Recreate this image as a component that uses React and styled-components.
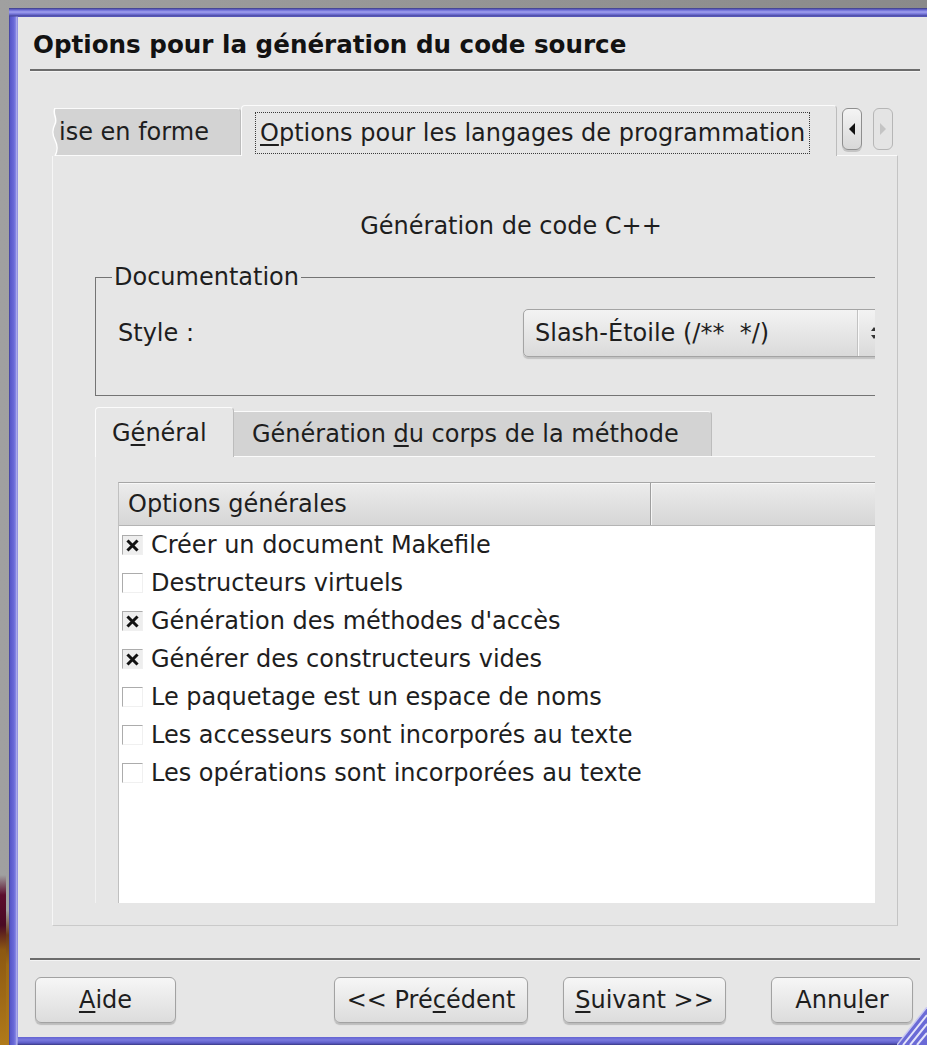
import React from "react";
import styled, { createGlobalStyle } from "styled-components";

const GlobalStyle = createGlobalStyle`
  html, body { margin: 0; padding: 0; overflow: hidden; }
  body {
    font-family: "DejaVu Sans", "Liberation Sans", sans-serif;
    font-size: 24px;
    color: #1e1e1e;
  }
  * { box-sizing: border-box; }
`;

const Desktop = styled.div`
  position: relative;
  width: 927px;
  height: 1045px;
  overflow: hidden;
  padding: 8px 0 0 9px;
  background:
    linear-gradient(to bottom, transparent 875px, #5c0d2e 895px, #4a0a24 925px, #8c5812 950px, #b07a1a 1045px) left top / 6px 100% no-repeat,
    linear-gradient(to bottom, transparent 910px, #6a3a1c 935px, #9c6a16 965px, #b07a1a 1045px) left top / 9px 100% no-repeat,
    linear-gradient(to right, #a0a0a0, #8a8a8a);
`;

const Window = styled.div`
  width: 932px;
  height: 1037px;
  padding: 9px 9px 8px 9px;
  display: flex;
  background:
    linear-gradient(to bottom, #3a3a82 0, #6c6cd6 2px, #a0a0ee 4px, #7474da 6px, #46469c 8px, transparent 9px),
    linear-gradient(to right, #3a3a82 0, #5656c8 1px, #6a6ad8 5px, #8a8ae6 7px, #c4c4f0 8px, transparent 9px),
    linear-gradient(to top, #3a3a82 0, #5c5cc8 2px, #7a7ade 5px, transparent 8px),
    #6464d2;
`;

const Dialog = styled.div`
  flex: 1;
  min-width: 0;
  display: flex;
  flex-direction: column;
  padding: 0 12px;
  background: #e6e6e6;
`;

const Title = styled.h1`
  margin: 14px 0 0;
  padding-left: 3px;
  font-size: 24.6px;
  line-height: 28px;
  font-weight: bold;
  color: #121212;
  white-space: nowrap;
`;

const Rule = styled.div`
  height: 2px;
  margin-top: ${(p) => p.$top}px;
  background: #6c6c6c;
  box-shadow: 0 1px 0 #f4f4f4;
`;

const TabWidget = styled.div`
  display: flex;
  flex-direction: column;
  margin: ${(p) => p.$top}px ${(p) => p.$side}px 0;
`;

const TabBar = styled.div`
  display: flex;
  align-items: flex-end;
  height: ${(p) => p.$h}px;
  padding-left: ${(p) => p.$indent || 0}px;
`;

const Tab = styled.div`
  position: relative;
  display: flex;
  align-items: center;
  flex: none;
  width: ${(p) => p.$w}px;
  height: ${(p) => p.$h}px;
  padding-left: ${(p) => p.$pad}px;
  white-space: nowrap;
  line-height: 28px;
  border-top: 1px solid #fbfbfb;
  border-right: 1px solid #bcbcbc;
  border-radius: 0 4px 0 0;
  background: ${(p) => (p.$active ? "#e6e6e6" : "#d3d3d3")};
  ${(p) =>
    p.$active
      ? `
    z-index: 1;
    margin-bottom: -1px;
    border-left: 1px solid #fbfbfb;
    border-radius: 4px 4px 0 0;
  `
      : ""}
`;

const TornEdge = styled.svg`
  position: absolute;
  left: -1px;
  top: -1px;
`;

const FocusRing = styled.span`
  display: flex;
  align-items: center;
  height: 42px;
  padding: 0 4px;
  margin-top: 3px;
  border: 1px dotted #3a3a3a;
`;

const Mnemonic = styled.span`
  text-decoration: underline;
  text-underline-offset: 3px;
  text-decoration-thickness: 2px;
`;

const ScrollButton = styled.div`
  display: flex;
  align-items: center;
  justify-content: center;
  flex: none;
  width: 20px;
  height: 42px;
  margin: 0 0 5px ${(p) => p.$gap}px;
  border: 1px solid ${(p) => (p.$disabled ? "#b6b6b6" : "#8e8e8e")};
  border-radius: 6px;
  background: ${(p) =>
    p.$disabled ? "#e4e4e4" : "linear-gradient(to bottom, #f4f4f4, #d8d8d8)"};
  box-shadow: ${(p) => (p.$disabled ? "none" : "0 2px 0 #c4c4c4")};
`;

const Panel = styled.div`
  display: flex;
  height: 771px;
  padding: 20px 22px 22px 42px;
  border: 1px solid;
  border-color: #fafafa #c4c4c4 #cacaca #f6f6f6;
`;

const Viewport = styled.div`
  flex: 1;
  min-width: 0;
  overflow: hidden;
`;

const Page = styled.div`
  width: 832px;
  display: flex;
  flex-direction: column;
`;

const Heading = styled.div`
  margin-top: 36px;
  text-align: center;
  line-height: 28px;
`;

const GroupBox = styled.fieldset`
  margin: 23px 12px 0 0;
  padding: 0 0 38px 0;
  min-width: 0;
  border: 1px solid #747474;
`;

const GroupTitle = styled.legend`
  margin-left: 16px;
  padding: 0 2px;
  line-height: 28px;
`;

const FieldRow = styled.div`
  display: flex;
  align-items: center;
  height: 48px;
  margin-top: 18px;
  padding-left: 22px;
`;

const FieldLabel = styled.span`
  width: 405px;
  flex: none;
  line-height: 28px;
`;

const Combo = styled.div`
  display: flex;
  flex: none;
  width: 390px;
  height: 48px;
  border: 1px solid #a4a4a4;
  border-radius: 5px;
  background: linear-gradient(to bottom, #f3f3f3, #dadada);
  box-shadow: 0 2px 1px #c2c2c2;
`;

const ComboText = styled.span`
  display: flex;
  align-items: center;
  width: 334px;
  padding-left: 11px;
  white-space: pre;
  border-right: 1px solid #c2c2c2;
  box-shadow: 1px 0 0 #fafafa;
`;

const ComboArrows = styled.span`
  display: flex;
  align-items: center;
  padding-left: 12px;
`;

const InnerPanel = styled.div`
  display: flex;
  flex-direction: column;
  padding: 25px 0 0 22px;
  border-top: 1px solid #fbfbfb;
  border-left: 1px solid #f2f2f2;
`;

const ListView = styled.div`
  display: flex;
  flex-direction: column;
  min-height: 440px;
  background: #ffffff;
  border-top: 1px solid #a6a6a6;
  border-left: 1px solid #c0c0c0;
`;

const ListHeader = styled.div`
  display: flex;
  height: 43px;
  border-bottom: 1px solid #b4b4b4;
  background: linear-gradient(to bottom, #ececec, #d6d6d6);
  box-shadow: inset 0 1px 0 #f8f8f8;
`;

const HeaderCell = styled.div`
  display: flex;
  align-items: center;
  width: ${(p) => (p.$w ? `${p.$w}px` : "auto")};
  flex: ${(p) => (p.$w ? "none" : "1")};
  padding-left: 9px;
  line-height: 28px;
  border-right: ${(p) => (p.$w ? "1px solid #9e9e9e" : "none")};
  box-shadow: ${(p) => (p.$w ? "1px 0 0 #f6f6f6" : "none")};
`;

const Row = styled.div`
  display: flex;
  align-items: center;
  height: 38px;
  padding-left: 3px;
  line-height: 28px;
  white-space: nowrap;
`;

const Box = styled.span`
  display: flex;
  align-items: center;
  justify-content: center;
  flex: none;
  width: 21px;
  height: 20px;
  margin-right: 8px;
  border: 1px solid;
  border-color: #acacac #f0f0f0 #f0f0f0 #acacac;
  background: ${(p) => (p.$checked ? "#eeeeee" : "#ffffff")};
`;

const ButtonRow = styled.div`
  display: flex;
  margin-top: 17px;
  padding: 0 7px 0 5px;
`;

const Button = styled.button`
  flex: none;
  width: ${(p) => p.$w}px;
  height: 46px;
  margin-left: ${(p) => (p.$auto ? "auto" : `${p.$gap || 0}px`)};
  padding: 0;
  font-family: inherit;
  font-size: 24px;
  color: #1e1e1e;
  border: 1px solid #a2a2a2;
  border-radius: 6px;
  background: linear-gradient(to bottom, #f6f6f6, #dcdcdc);
  box-shadow: 0 2px 1px rgba(0, 0, 0, 0.18);
`;

const Grip = styled.svg`
  position: absolute;
  right: 0;
  bottom: 0;
`;

function CheckMark() {
  return (
    <svg width="13" height="13" viewBox="0 0 13 13">
      <path d="M2.5 2.5 L10.5 10.5 M10.5 2.5 L2.5 10.5" stroke="#111" strokeWidth="3" strokeLinecap="square" />
    </svg>
  );
}

function Check({ checked, children }) {
  return (
    <Row>
      <Box $checked={checked}>{checked && <CheckMark />}</Box>
      {children}
    </Row>
  );
}

const options = [
  ["Créer un document Makefile", true],
  ["Destructeurs virtuels", false],
  ["Génération des méthodes d'accès", true],
  ["Générer des constructeurs vides", true],
  ["Le paquetage est un espace de noms", false],
  ["Les accesseurs sont incorporés au texte", false],
  ["Les opérations sont incorporées au texte", false],
];

export default function App() {
  return (
    <>
      <GlobalStyle />
      <Desktop>
        <Window>
          <Dialog>
            <Title>Options pour la génération du code source</Title>
            <Rule $top={10} />

            <TabWidget $top={34} $side={22}>
              <TabBar $h={50} $indent={1}>
                <Tab $w={188} $h={47} $pad={6}>
                  <TornEdge width="8" height="48" viewBox="0 0 8 48">
                    <path
                      d="M3 0 C0 6, 6 10, 3 16 S0 26, 3 32 S6 42, 3 48 L0 48 L0 0 Z"
                      fill="#e6e6e6"
                    />
                    <path
                      d="M3 0 C0 6, 6 10, 3 16 S0 26, 3 32 S6 42, 3 48"
                      fill="none"
                      stroke="#ffffff"
                      strokeWidth="1.5"
                    />
                  </TornEdge>
                  ise en forme
                </Tab>
                <Tab $active $w={596} $h={51} $pad={13}>
                  <FocusRing>
                    <span>
                      <Mnemonic>O</Mnemonic>ptions pour les langages de programmation
                    </span>
                  </FocusRing>
                </Tab>
                <ScrollButton $gap={5}>
                  <svg width="8" height="12" viewBox="0 0 8 12">
                    <path d="M7 0 L1 6 L7 12 Z" fill="#111" />
                  </svg>
                </ScrollButton>
                <ScrollButton $gap={11} $disabled>
                  <svg width="8" height="12" viewBox="0 0 8 12">
                    <path d="M1 0 L7 6 L1 12 Z" fill="#c4c4c4" />
                  </svg>
                </ScrollButton>
              </TabBar>

              <Panel>
                <Viewport>
                  <Page>
                    <Heading>Génération de code C++</Heading>

                    <GroupBox>
                      <GroupTitle>Documentation</GroupTitle>
                      <FieldRow>
                        <FieldLabel>Style :</FieldLabel>
                        <Combo>
                          <ComboText>{"Slash-Étoile (/**  */)"}</ComboText>
                          <ComboArrows>
                            <svg width="8" height="16" viewBox="0 0 8 16">
                              <path d="M4 2 L7 6 L1 6 Z M4 14 L7 10 L1 10 Z" fill="#333" />
                            </svg>
                          </ComboArrows>
                        </Combo>
                      </FieldRow>
                    </GroupBox>

                    <TabWidget $top={11} $side={0}>
                      <TabBar $h={49}>
                        <Tab $active $w={139} $h={50} $pad={16}>
                          <span>
                            G<Mnemonic>é</Mnemonic>néral
                          </span>
                        </Tab>
                        <Tab $w={478} $h={45} $pad={18}>
                          <span>
                            Génération <Mnemonic>d</Mnemonic>u corps de la méthode
                          </span>
                        </Tab>
                      </TabBar>
                      <InnerPanel>
                        <ListView>
                          <ListHeader>
                            <HeaderCell $w={532}>Options générales</HeaderCell>
                            <HeaderCell />
                          </ListHeader>
                          {options.map(([label, checked]) => (
                            <Check key={label} checked={checked}>
                              {label}
                            </Check>
                          ))}
                        </ListView>
                      </InnerPanel>
                    </TabWidget>
                  </Page>
                </Viewport>
              </Panel>
            </TabWidget>

            <Rule $top={32} />

            <ButtonRow>
              <Button $w={141}>
                <Mnemonic>A</Mnemonic>ide
              </Button>
              <Button $w={194} $auto>
                {"<< Pré"}
                <Mnemonic>c</Mnemonic>édent
              </Button>
              <Button $w={163} $gap={35}>
                <Mnemonic>S</Mnemonic>
                {"uivant >>"}
              </Button>
              <Button $w={142} $gap={45}>
                Annu<Mnemonic>l</Mnemonic>er
              </Button>
            </ButtonRow>
          </Dialog>
        </Window>

        <Grip width="30" height="38" viewBox="0 0 30 38">
          <path d="M0 38 L30 0 L30 38 Z" fill="#6a6ad6" />
          <path d="M6 38 L30 8 M13 38 L30 17 M20 38 L30 26" stroke="#e4e4fa" strokeWidth="2" />
          <path d="M0 38 L30 0" stroke="#c8c8f2" strokeWidth="1.5" />
        </Grip>
      </Desktop>
    </>
  );
}
